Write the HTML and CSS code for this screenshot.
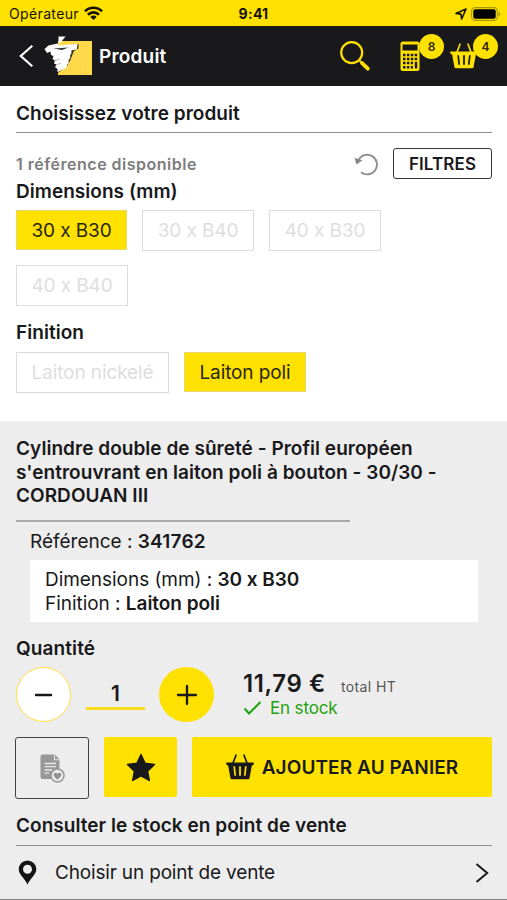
FILE: index.html
```html
<!DOCTYPE html>
<html lang="fr">
<head>
<meta charset="utf-8">
<title>Produit</title>
<link rel="stylesheet" href="styles.css">
</head>
<body>
<svg class="defs" aria-hidden="true">
  <symbol id="basket" viewBox="0 0 28 26">
    <path d="M10 1.200 7 9M18 1.200 21 9" fill="none" stroke="currentColor" stroke-width="1.700" stroke-linecap="round"/>
    <path fill="currentColor" fill-rule="evenodd" d="M.8 8.600h26.400a.7.7 0 0 1 .6.9l-.4 1.200a.8.8 0 0 1-.8.5h-.7l-2.400 13a1.400 1.400 0 0 1-1.300 1H5.800a1.400 1.400 0 0 1-1.300-1L2.100 11.200h-.7a.8.8 0 0 1-.8-.5L.2 9.500a.7.7 0 0 1 .6-.9zM7.300 12.300l1.100 9.500h1.700L9 12.300zM13.100 12.300v9.500h1.800v-9.500zM19 12.300l-1.100 9.500h1.700l1.100-9.500z"/>
  </symbol>
</svg>
<div class="screen">
  <div class="status">
    <div class="carrier">Opérateur
      <svg width="19" height="14" viewBox="0 0 19 14"><g fill="none" stroke="#161300" stroke-width="2.700"><path d="M1 5.300a12 12 0 0 1 17 0"/><path d="M4 8.700a7.800 7.800 0 0 1 11 0"/></g><path d="M9.500 13.900 6.300 10.900a4.500 4.500 0 0 1 6.400 0z" fill="#161300"/></svg>
    </div>
    <div class="clock">9:41</div>
    <div class="power">
      <svg width="12" height="12" viewBox="0 0 12 12"><path d="M11 1 1 5.400l4.900.7.8 4.900z" fill="none" stroke="#161300" stroke-width="1.600" stroke-linejoin="round"/></svg>
      <svg width="30" height="14" viewBox="0 0 30 14"><rect x=".6" y=".6" width="25.800" height="12.800" rx="3.600" fill="none" stroke="#a89500" stroke-width="1.100"/><rect x="2.300" y="2.300" width="22.400" height="9.400" rx="2" fill="#000"/><path d="M27.600 4.800c2.300.7 2.300 3.700 0 4.400z" fill="#a89500"/></svg>
    </div>
  </div>
  <header class="nav">
    <svg class="back" width="15" height="24" viewBox="0 0 15 24"><path d="M13.300 1.800 1.800 12l11.500 10.200" fill="none" stroke="#fff" stroke-width="2.200"/></svg>
    <svg class="logo" width="50" height="42" viewBox="0 0 50 42">
      <path d="M14 6h34v34H14z" fill="#ffd94a"/>
      <path d="M27 9.500 34.500 9v4.500l-4.500 2.500-2 5-2 5-3 5-9 7z" fill="#3b3420"/>
      <path d="M14.500 1.500h7L16.300 8h-1.800zM.5 14l4-3.500 9-2 2 2 9-1L33.500 9l-.7 5.500-5.300.8-.2 3.700-1.300 1 .3 3-1.800 2 .3 3-2 2 .2 2.500-9.500 4.500v-3l-2.500-2 1.500-2.500-2.500-1 1-3-2.500-1.500 1-3-2.500-1-.5-3.500L3 18z" fill="#fff"/>
      <path d="m9.500 13.500 15-1-6.500 2.500z" fill="#333"/><path d="m10 26 6-2M12 30l5-2" stroke="#999" stroke-width=".7"/>
    </svg>
    <h1>Produit</h1>
    <svg class="search" width="32" height="32" viewBox="0 0 32 32" fill="none" stroke="#ffe100" stroke-linecap="round"><circle cx="12.700" cy="12.600" r="10.500" stroke-width="2.200"/><path d="m20.300 20.400 2 2" stroke-width="2"/><path d="m22.800 22.900 6 5.800" stroke-width="3.800"/></svg>
    <div class="tool calc">
      <svg width="20" height="31" viewBox="0 0 20 31"><rect x=".5" y=".5" width="19" height="29.500" rx="2.500" fill="#ffe100"/><path d="M2.500 3.500h15v6h-15z" fill="#19191b"/><path d="M3 14h14.500M3 18h14.500M3 22h10M3 26.200h10" stroke="#19191b" stroke-width="2.400" stroke-dasharray="2.500 1.400"/><path d="M16 20.800v6.600" stroke="#19191b" stroke-width="2.400"/></svg>
      <span class="badge">8</span>
    </div>
    <div class="tool cart">
      <svg width="28" height="26"><use href="#basket"/></svg>
      <span class="badge">4</span>
    </div>
  </header>

  <main>
    <section class="choice">
      <h2 class="heading">Choisissez votre produit</h2>
      <div class="filters">
        <span class="count">1 référence disponible</span>
        <svg width="24" height="24" viewBox="0 0 24 24"><path d="M4.400 8.200A9.800 9.800 0 1 1 7 20.200" fill="none" stroke="#929292" stroke-width="1.900"/><path d="m.5 6 2 6.500 6-4.300z" fill="#858585"/></svg>
        <button class="filter-btn">FILTRES</button>
      </div>
      <h3 class="dim-label">Dimensions (mm)</h3>
      <div class="chips">
        <span class="chip size on">30 x B30</span><span class="chip size">30 x B40</span><span class="chip size">40 x B30</span><span class="chip size">40 x B40</span>
      </div>
      <h3 class="fin-label">Finition</h3>
      <div class="chips">
        <span class="chip nickel">Laiton nickelé</span><span class="chip brass on">Laiton poli</span>
      </div>
    </section>

    <section class="product">
      <h2 class="title">Cylindre double de sûreté - Profil européen<br>s'entrouvrant en laiton poli à bouton - 30/30 -<br>CORDOUAN III</h2>
      <div class="rule"></div>
      <div class="ref">Référence : <b>341762</b></div>
      <div class="specs">
        <div>Dimensions (mm) : <b>30 x B30</b></div>
        <div>Finition : <b>Laiton poli</b></div>
      </div>
      <h3 class="qty-label">Quantité</h3>
      <div class="qty">
        <button class="round minus"><svg width="19" height="4"><path d="M2 2h15" stroke="#19191b" stroke-width="2.500" stroke-linecap="round"/></svg></button>
        <div class="amount">1</div>
        <button class="round plus"><svg width="22" height="22"><path d="M2 11h18M11 2v18" stroke="#19191b" stroke-width="2.300" stroke-linecap="round"/></svg></button>
        <div class="cost">
          <div class="price-row"><span class="price">11,79 €</span><span class="total">total HT</span></div>
          <div class="stock"><svg width="19" height="14" viewBox="0 0 19 14"><path d="m1.500 7.500 4.500 5L17.500 1" fill="none" stroke="#1da30e" stroke-width="2"/></svg><span>En stock</span></div>
        </div>
      </div>
      <div class="actions">
        <button class="list-btn">
          <svg width="25" height="29" viewBox="0 0 25 29"><path d="M2.500.5h12.300l4.700 4.800V25h-17a2 2 0 0 1-2-2V2.500a2 2 0 0 1 2-2z" fill="#989898"/><path d="M14.500 1v4.800h5" fill="none" stroke="#ededed" stroke-width="1"/><path d="M4.500 9.500H16M4.500 12.700H16M4.500 16H12M4.500 19.200H9" stroke="#e5e5e5" stroke-width="1.300"/><circle cx="17.500" cy="21.500" r="6.500" fill="#ededed" stroke="#989898" stroke-width="1.500"/><path d="M17.500 25.800c-7-5-2.800-8.700 0-6.100 2.800-2.600 7 1.100 0 6.100z" fill="#929292"/></svg>
        </button>
        <button class="fav-btn"><svg width="30" height="29" viewBox="0 0 30 29"><path d="m15 1.500 4.100 8.700 9.400 1.300-6.900 6.700 1.700 9.300-8.300-4.500-8.300 4.500 1.700-9.300-6.900-6.700 9.400-1.300z" fill="#19191b" stroke="#19191b" stroke-width="1.400" stroke-linejoin="round"/></svg></button>
        <button class="add-btn"><svg width="28" height="26" viewBox="0 0 28 26"><use href="#basket"/></svg><span>AJOUTER AU PANIER</span></button>
      </div>
      <h2 class="heading shop-heading">Consulter le stock en point de vente</h2>
      <div class="shop">
        <svg width="19" height="25" viewBox="0 0 19 25"><path fill="#151515" fill-rule="evenodd" d="M9.500.5a8.800 8.800 0 0 1 8.800 8.800c0 5.700-6 8.700-8.800 15.200C6.700 18 .7 15 .7 9.300A8.800 8.800 0 0 1 9.500.5zm0 4.300a4.500 4.500 0 1 0 0 9 4.500 4.500 0 0 0 0-9z"/></svg>
        <span>Choisir un point de vente</span>
        <svg class="next" width="14" height="20" viewBox="0 0 14 20"><path d="m1.500 1 10.700 9L1.500 19" fill="none" stroke="#19191b" stroke-width="2"/></svg>
      </div>
    </section>
  </main>
</div>
</body>
</html>
```

FILE: styles.css
```css
* { box-sizing: border-box; }
body { margin: 0; background: #fff; color: #19191b; font-family: Inter, sans-serif; font-size: 19px; }
h1, h2, h3 { margin: 0; font-weight: 600; font-size: 19px; letter-spacing: 0.04px; white-space: nowrap; }
button { font: inherit; color: inherit; padding: 0; margin: 0; border: 0; display: flex; align-items: center; justify-content: center; flex: none; }
svg { display: block; flex: none; }
b { font-weight: 600; }
.defs { position: absolute; width: 0; height: 0; }
.screen { width: 507px; height: 900px; overflow: hidden; display: flex; flex-direction: column; }

.status { height: 26px; flex: none; background: #ffe100; color: #161300; display: grid; grid-template-columns: 1fr auto 1fr; align-items: center; padding: 1px 6px 0 9px; }
.carrier { display: flex; align-items: center; gap: 5px; font-size: 14px; letter-spacing: 0.36px; }
.carrier svg { margin-top: -2px; }
.clock { font-size: 14px; font-weight: 700; letter-spacing: 0.3px; margin-right: 3px; }
.power { display: flex; justify-content: flex-end; align-items: center; gap: 4px; }

.nav { height: 60px; flex: none; background: #19191b; color: #fff; display: flex; align-items: center; padding-left: 19px; }
.logo { margin: 0 5px 0 10px; }
.nav h1 { font-size: 19px; width: 240px; letter-spacing: 0.2px; }
.search { margin-right: 29px; }
.tool { position: relative; color: #ffe100; }
.calc { margin-right: 30px; }
.badge { position: absolute; width: 25px; height: 25px; border-radius: 50%; background: #ffe100; color: #2b2700; font-size: 12px; font-weight: 600; line-height: 25px; text-align: center; }
.calc .badge { left: 19px; top: -7px; }
.cart .badge { left: 23px; top: -9px; }

.choice { height: 335px; padding: 0 15px 0 16px; }
.heading { height: 47px; padding-top: 4px; line-height: 48px; border-bottom: 1px solid #8d8d8d; }
.filters { display: flex; align-items: center; height: 31px; margin-top: 15px; }
.count { flex: 1; font-size: 16px; letter-spacing: 0.5px; font-weight: 600; color: #7c7c7c; }
.filter-btn { width: 100px; height: 31px; margin-left: 15px; border: 1.500px solid #353537; border-radius: 3px; background: #fff; font-size: 17px; letter-spacing: 0.1px; font-weight: 600; }
.filters .filter-btn { width: 99px; }
.dim-label { line-height: 24px; padding-top: 1px; }
.chips { display: flex; flex-wrap: wrap; gap: 15px; }
.dim-label + .chips { margin-top: 6px; row-gap: 14px; }
.chip { height: 41px; border: 1px solid #dcdcdc; color: #dedede; display: flex; align-items: center; justify-content: center; font-size: 19px; letter-spacing: -0.1px; white-space: nowrap; }
.chip.on { background: #ffe100; color: #29270d; border-color: #e7d96b; height: 40px; }
.size { width: 112px; }
.size.on { width: 111px; }
.nickel { width: 153px; }
.brass { width: 122px; }
.fin-label { margin-top: 15px; line-height: 24px; }
.fin-label + .chips { margin-top: 7px; }

.product { height: 479px; background: #ededed; padding: 16px 15px 0 16px; border-bottom: 1px solid #858585; }
.title { line-height: 23.500px; height: 71px; }
.rule { width: 334px; height: 2px; margin-top: 12px; background: #aaa; }
.ref { margin: 8px 0 0 14px; line-height: 24px; }
.ref b { letter-spacing: 0.2px; }
.specs { margin: 6px 14px 0 14px; height: 62px; background: #fff; padding: 8px 15px; line-height: 23.500px; letter-spacing: -0.04px; }
.qty-label { line-height: 24px; margin-top: 15px; letter-spacing: 0.1px; }
.qty { display: flex; height: 56px; margin-top: 6px; }
.round { width: 55px; height: 55px; border-radius: 50%; background: #ffe100; }
.minus { background: #fff; border: 1.500px solid #ffe045; }
.amount { width: 59px; height: 43px; margin: 0 14px 0 15px; border-bottom: 3px solid #f8dc1d; text-align: center; font-size: 21px; font-weight: 600; line-height: 54px; }
.cost { margin-left: 29px; }
.price-row { display: flex; align-items: baseline; gap: 15px; height: 32px; line-height: 33px; }
.price { font-size: 24px; font-weight: 600; letter-spacing: 0.6px; }
.total { font-size: 14px; color: #555; letter-spacing: 0.4px; }
.stock { display: flex; align-items: center; gap: 8px; color: #1da30e; font-size: 17px; letter-spacing: -0.15px; line-height: 18px; }
.actions { display: flex; gap: 15px; height: 62px; margin-top: 14px; margin-left: -1px; }
.list-btn { width: 74px; height: 62px; border: 1.500px solid #414143; border-radius: 3px; background: #ededed; }
.fav-btn { width: 73px; height: 60px; background: #ffe100; border-radius: 2px; }
.add-btn { flex: 1; height: 60px; background: #ffe100; border-radius: 2px; gap: 8px; font-weight: 600; letter-spacing: 0.1px; white-space: nowrap; }
.shop-heading { height: 47px; padding-top: 0; line-height: 54px; }
.shop { height: 53px; display: flex; align-items: center; padding: 0 3px 0 2px; }
.shop span { flex: 1; margin-left: 18px; letter-spacing: -0.17px; }
```
